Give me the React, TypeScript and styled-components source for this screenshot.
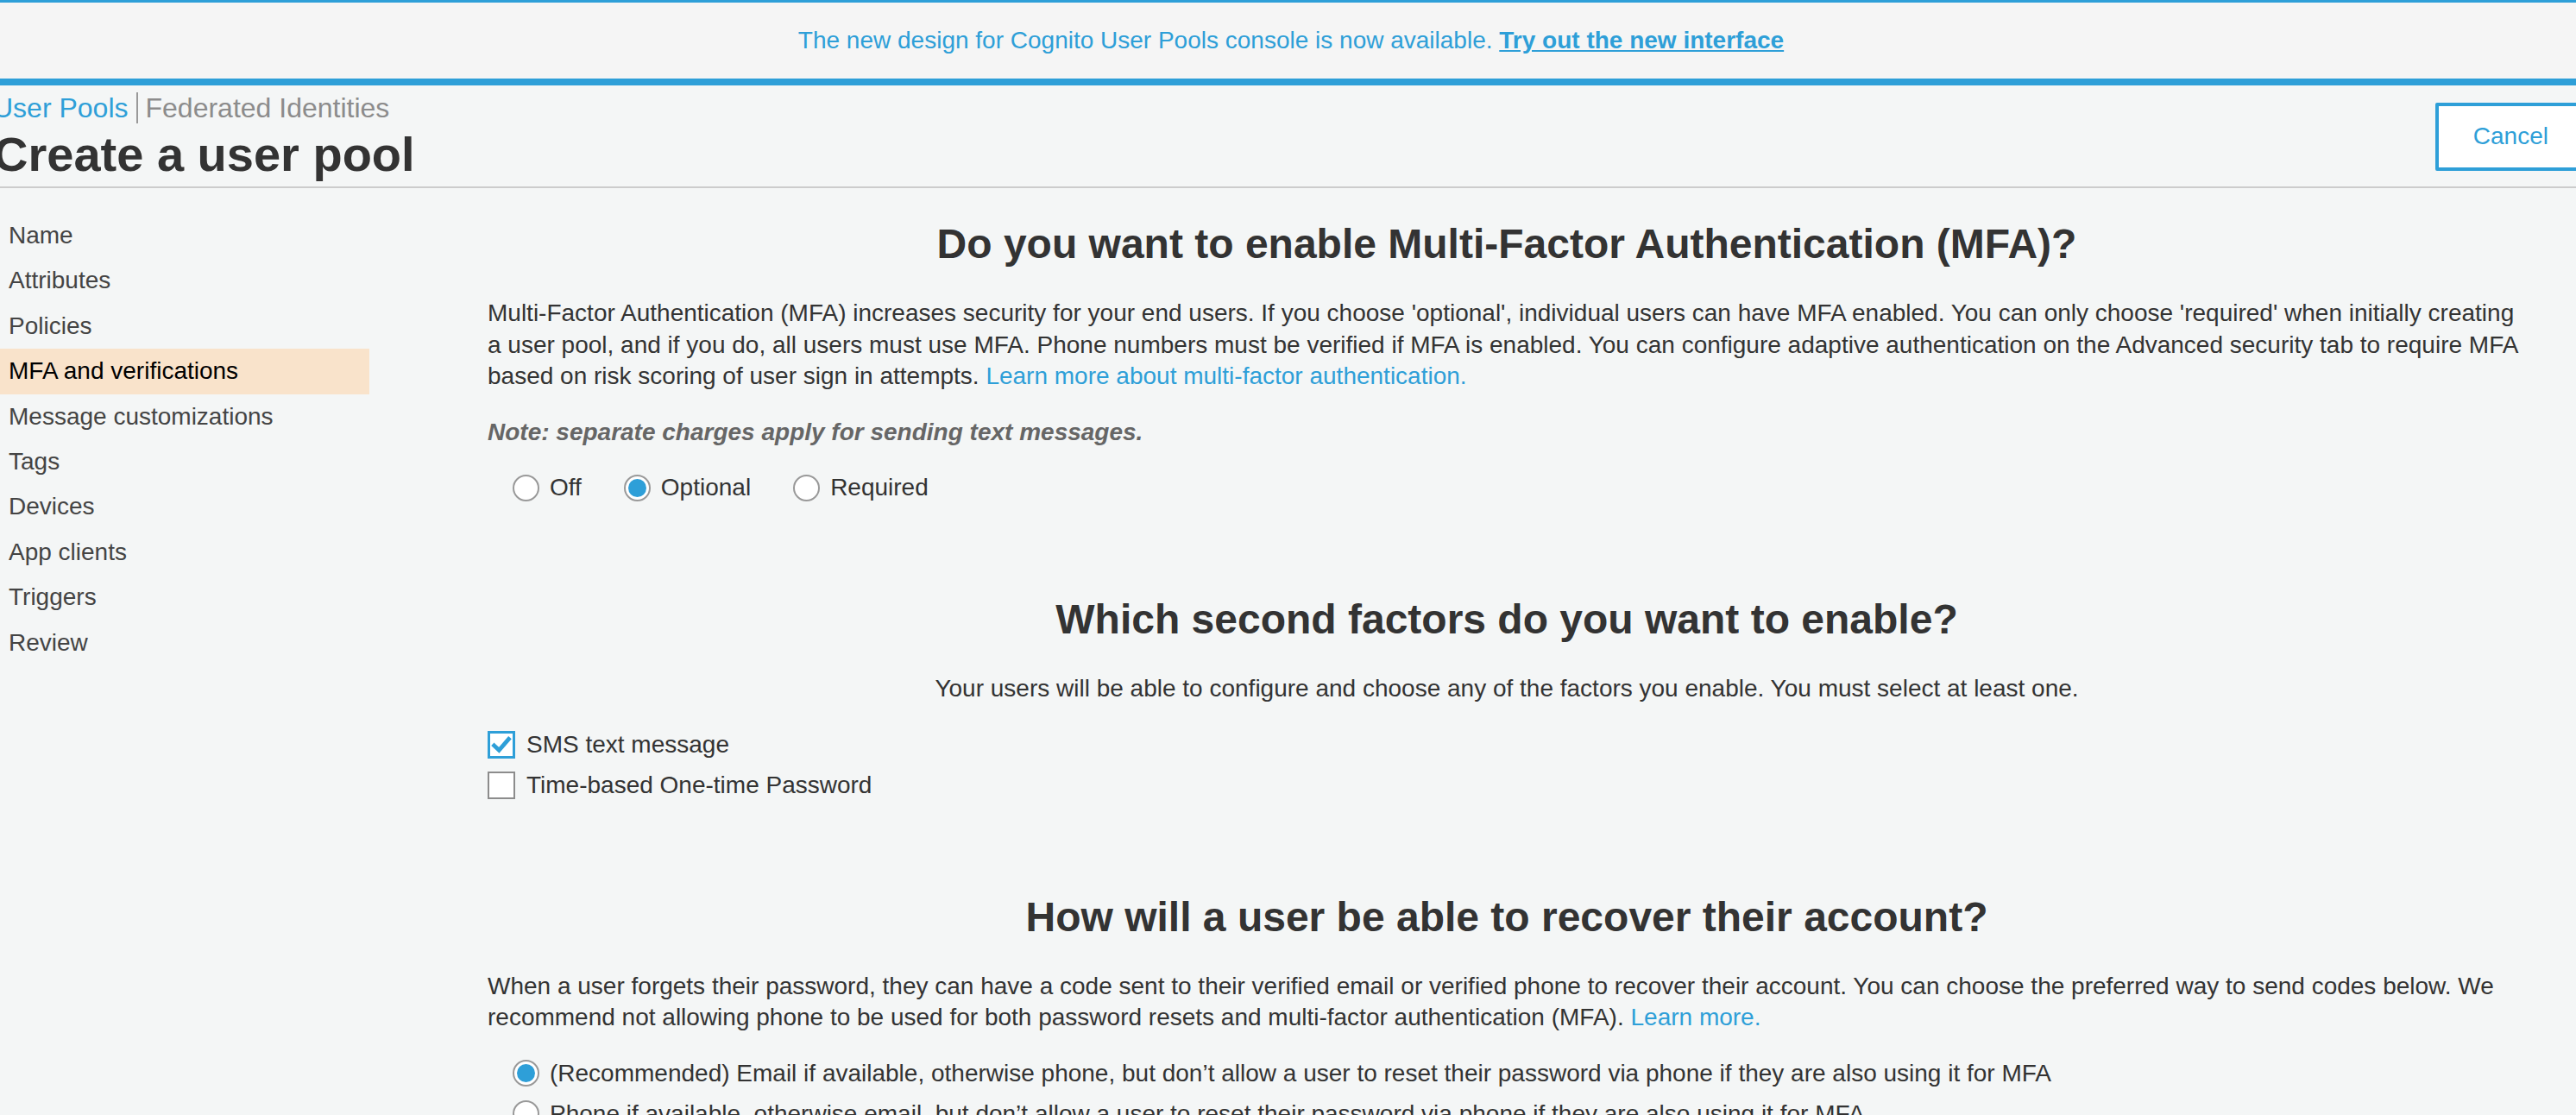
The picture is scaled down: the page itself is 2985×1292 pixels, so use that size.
import styled, { createGlobalStyle } from "styled-components";

const BLUE = "#2e9fd8";

const GlobalStyle = createGlobalStyle`
	html, body {
		margin: 0;
		padding: 0;
	}
	body {
		background: #f4f6f6;
		font-family: "Liberation Sans", Arial, sans-serif;
		color: #333;
		overflow: hidden;
	}
	* {
		box-sizing: border-box;
	}
`;

const navItems = [
	"Name",
	"Attributes",
	"Policies",
	"MFA and verifications",
	"Message customizations",
	"Tags",
	"Devices",
	"App clients",
	"Triggers",
	"Review",
];

/**
 * Cognito "Create a user pool" wizard, MFA step
 */
export default function App() {
	return (
		<>
			<GlobalStyle/>
			<Page>
				<Banner>
					The new design for Cognito User Pools console is now available.&nbsp;
					<BannerLink>Try out the new interface</BannerLink>
				</Banner>

				<Header>
					<div>
						<Crumbs>
							<CrumbLink>User Pools</CrumbLink>
							<CrumbSep/>
							<CrumbMuted>Federated Identities</CrumbMuted>
						</Crumbs>
						<Title>Create a user pool</Title>
					</div>
					<CancelButton>Cancel</CancelButton>
				</Header>

				<Body>
					<Sidebar>
						{navItems.map(item => (
							<NavItem key={item} $active={item === "MFA and verifications"}>{item}</NavItem>
						))}
					</Sidebar>

					<Content>
						<Section>
							<SectionTitle>Do you want to enable Multi-Factor Authentication (MFA)?</SectionTitle>
							<Text>
								Multi-Factor Authentication (MFA) increases security for your end users. If you choose 'optional', individual users
								can have MFA enabled. You can only choose 'required' when initially creating a user pool, and if you do, all users
								must use MFA. Phone numbers must be verified if MFA is enabled. You can configure adaptive authentication on the
								Advanced security tab to require MFA based on risk scoring of user sign in attempts.{" "}
								<Link>Learn more about multi-factor authentication.</Link>
							</Text>
							<Note>Note: separate charges apply for sending text messages.</Note>
							<RadioInline>
								<Option><Radio/>Off</Option>
								<Option><Radio $checked/>Optional</Option>
								<Option><Radio/>Required</Option>
							</RadioInline>
						</Section>

						<Section>
							<SectionTitle>Which second factors do you want to enable?</SectionTitle>
							<Subtitle>Your users will be able to configure and choose any of the factors you enable. You must select at least one.</Subtitle>
							<Stack>
								<Option>
									<CheckBox $checked>
										<svg width="24" height="24" viewBox="0 0 16 16">
											<polyline points="2.4,8.6 6.2,12.2 13.6,3.6" fill="none" stroke={BLUE} strokeWidth="3.2" strokeLinecap="square"/>
										</svg>
									</CheckBox>
									SMS text message
								</Option>
								<Option><CheckBox/>Time-based One-time Password</Option>
							</Stack>
						</Section>

						<Section>
							<SectionTitle>How will a user be able to recover their account?</SectionTitle>
							<Text>
								When a user forgets their password, they can have a code sent to their verified email or verified phone to recover
								their account. You can choose the preferred way to send codes below. We recommend not allowing phone to be used for
								both password resets and multi-factor authentication (MFA). <Link>Learn more.</Link>
							</Text>
							<Stack $indent>
								<Option><Radio $checked/>(Recommended) Email if available, otherwise phone, but don’t allow a user to reset their password via phone if they are also using it for MFA</Option>
								<Option><Radio/>Phone if available, otherwise email, but don’t allow a user to reset their password via phone if they are also using it for MFA</Option>
							</Stack>
						</Section>
					</Content>
				</Body>
			</Page>
		</>
	)
}

const Page = styled.div`
	width: 3016px;
	margin-left: -12px;
	min-height: 1292px;
`

const Banner = styled.div`
	height: 99px;
	border-top: 3px solid ${BLUE};
	border-bottom: 8px solid ${BLUE};
	background: #f5f5f5;
	display: flex;
	align-items: center;
	justify-content: center;
	font-size: 28px;
	color: ${BLUE};
`

const BannerLink = styled.a`
	font-weight: bold;
	text-decoration: underline;
	color: ${BLUE};
`

const Header = styled.header`
	display: flex;
	align-items: center;
	justify-content: space-between;
	padding: 8px 7px 7px 4px;
	border-bottom: 2px solid #cccccc;
`

const Crumbs = styled.div`
	display: flex;
	align-items: center;
	font-size: 32px;
	line-height: 36px;
`

const CrumbLink = styled.span`
	color: ${BLUE};
`

const CrumbSep = styled.span`
	width: 2px;
	height: 36px;
	margin: 0 9px;
	background: #999999;
`

const CrumbMuted = styled.span`
	color: #8c8c8c;
`

const Title = styled.h1`
	margin: 6px 0 0;
	font-size: 56px;
	line-height: 60px;
	font-weight: bold;
	color: #333;
`

const CancelButton = styled.button`
	height: 79px;
	padding: 0 40px;
	border: 4px solid ${BLUE};
	border-radius: 2px;
	background: #ffffff;
	color: ${BLUE};
	font-family: inherit;
	font-size: 28px;
`

const Body = styled.div`
	display: grid;
	grid-template-columns: 440px 2362px;
	column-gap: 137px;
	align-items: start;
`

const Sidebar = styled.nav`
	padding-top: 29px;
	display: flex;
	flex-direction: column;
`

const NavItem = styled.div<{ $active?: boolean }>`
	height: 52.4px;
	line-height: 52.4px;
	padding-left: 22px;
	font-size: 28px;
	color: ${p => p.$active ? "#000" : "#444"};
	background: ${p => p.$active ? "#f9e3cb" : "transparent"};
`

const Content = styled.main`
	padding-top: 38px;
`

const Section = styled.section`
	& + & {
		margin-top: 108px;
	}
`

const SectionTitle = styled.h2`
	margin: 0 0 35px;
	text-align: center;
	font-size: 48px;
	line-height: 54px;
	font-weight: bold;
	color: #333;
`

const Text = styled.p`
	margin: 0 0 28px;
	font-size: 28px;
	line-height: 36.5px;
	color: #333;
`

const Subtitle = styled(Text)`
	text-align: center;
`

const Note = styled(Text)`
	font-style: italic;
	font-weight: bold;
	color: #666;
`

const Link = styled.a`
	color: ${BLUE};
`

const RadioInline = styled.div`
	display: flex;
	gap: 49px;
	padding-left: 29px;
`

const Stack = styled.div<{ $indent?: boolean }>`
	display: flex;
	flex-direction: column;
	gap: 11px;
	padding-left: ${p => p.$indent ? "29px" : "0"};
`

const Option = styled.label`
	display: flex;
	align-items: center;
	gap: 12px;
	height: 36px;
	font-size: 28px;
	color: #333;
	white-space: nowrap;
`

const Radio = styled.span<{ $checked?: boolean }>`
	flex: none;
	width: 31px;
	height: 31px;
	border: 2px solid #999;
	border-radius: 50%;
	background: #fff;
	display: flex;
	align-items: center;
	justify-content: center;
	&::after {
		content: "";
		width: 21px;
		height: 21px;
		border-radius: 50%;
		background: ${p => p.$checked ? BLUE : "transparent"};
	}
`

const CheckBox = styled.span<{ $checked?: boolean }>`
	flex: none;
	width: 32px;
	height: 32px;
	border: ${p => p.$checked ? `3px solid ${BLUE}` : "2px solid #8c8c8c"};
	background: #fff;
	display: flex;
	align-items: center;
	justify-content: center;
	margin-right: 1px;
`
